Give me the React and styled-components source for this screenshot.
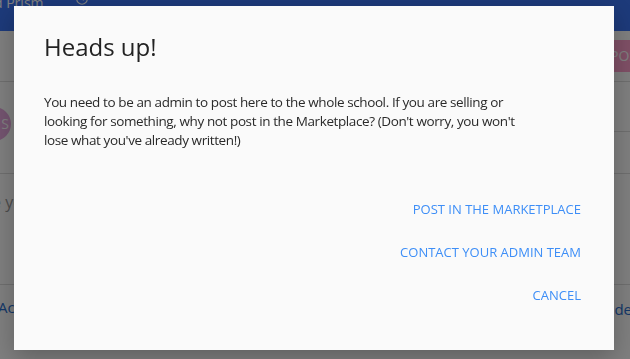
import React from 'react'
import styled, { createGlobalStyle } from 'styled-components'

const GlobalStyle = createGlobalStyle`
  html, body {
    margin: 0;
    padding: 0;
    background: #ffffff;
    font-family: "Open Sans", "Liberation Sans", sans-serif;
    overflow: hidden;
  }
`

const Page = styled.div`
  width: 630px;
  height: 359px;
  display: flex;
  flex-direction: column;
  background: #ffffff;
`

const Header = styled.div`
  height: 31px;
  flex: none;
  background: #3a74f4;
  display: flex;
  align-items: flex-start;
  gap: 31px;
  overflow: hidden;
`

const HeaderTitle = styled.span`
  margin-top: -7px;
  margin-left: -6px;
  color: #ffffff;
  font-size: 14px;
  line-height: 20px;
  white-space: nowrap;
`

const ClockIcon = styled.svg`
  margin-top: -8px;
  width: 14px;
  height: 14px;
  color: #ffffff;
`

const Row = styled.div`
  height: ${p => p.$height}px;
  flex: none;
  border-bottom: 1px solid #dddddd;
  display: flex;
  align-items: ${p => p.$align || 'center'};
  justify-content: ${p => p.$justify || 'space-between'};
  overflow: hidden;
`

const PostButton = styled.div`
  margin-right: -50px;
  width: 70px;
  height: 32px;
  border-radius: 3px;
  background: #ff9fcc;
  color: #ffffff;
  font-size: 14px;
  line-height: 32px;
  padding-left: 10px;
`

const Avatar = styled.div`
  margin-left: -23px;
  margin-top: -8px;
  width: 34px;
  height: 34px;
  border-radius: 50%;
  background: #e8a8e0;
  color: #ffffff;
  font-size: 14px;
  line-height: 34px;
  text-align: right;
  padding-right: 2px;
  box-sizing: border-box;
`

const SideColumn = styled.div`
  align-self: stretch;
  width: 20px;
  display: flex;
  flex-direction: column;
`

const SideCell = styled.div`
  height: ${p => p.$height}px;
  border-bottom: 1px solid #dddddd;
`

const Placeholder = styled.span`
  margin-left: -8px;
  margin-top: 17px;
  color: #999999;
  font-size: 16px;
  white-space: nowrap;
`

const LinkText = styled.span`
  margin-top: ${p => p.$top}px;
  color: #2a6fd0;
  font-size: 15px;
  white-space: nowrap;
`

const Backdrop = styled.div`
  position: fixed;
  inset: 0;
  background: rgba(0, 0, 0, 0.5);
  display: flex;
  align-items: flex-start;
  justify-content: flex-start;
  padding: 6px 0 0 14px;
`

const Dialog = styled.div`
  width: 600px;
  height: 344px;
  box-sizing: border-box;
  background: #fafafa;
  padding: 24px 25px 24px 30px;
  display: flex;
  flex-direction: column;
  box-shadow: 0 8px 24px rgba(0, 0, 0, 0.25);
`

const Title = styled.h2`
  margin: 0 0 30px;
  font-size: 24px;
  font-weight: 400;
  line-height: normal;
  color: #222222;
`

const Message = styled.p`
  margin: 0;
  max-width: 486px;
  font-size: 13.5px;
  letter-spacing: -0.4px;
  line-height: 19px;
  color: #2a2a2a;
`

const Actions = styled.div`
  margin-top: 38px;
  display: flex;
  flex-direction: column;
  align-items: flex-end;
`

const ActionButton = styled.button`
  border: none;
  background: transparent;
  padding: 12px 8px;
  font-family: "Open Sans", "Liberation Sans", sans-serif;
  font-size: 13px;
  line-height: 19px;
  text-transform: uppercase;
  color: #3d8ef7;
  cursor: pointer;
`

export default function App() {
  return (
    <>
      <GlobalStyle />
      <Page>
        <Header>
          <HeaderTitle>d Prism</HeaderTitle>
          <ClockIcon viewBox="0 0 24 24" fill="none" stroke="currentColor" strokeWidth="2">
            <circle cx="12" cy="12" r="9" />
            <path d="M12 7v5l3 2" />
          </ClockIcon>
        </Header>
        <Row $height={50} $justify="flex-end">
          <PostButton>POST</PostButton>
        </Row>
        <Row $height={91}>
          <Avatar>S</Avatar>
          <SideColumn>
            <SideCell $height={49} />
          </SideColumn>
        </Row>
        <Row $height={110} $align="flex-start">
          <Placeholder>e your</Placeholder>
        </Row>
        <Row $height={76} $align="flex-start">
          <LinkText $top={12} style={{ marginLeft: -2 }}>Ac</LinkText>
          <LinkText $top={14} style={{ marginRight: -2 }}>de</LinkText>
        </Row>
      </Page>
      <Backdrop>
        <Dialog role="dialog">
          <Title>Heads up!</Title>
          <Message>
            You need to be an admin to post here to the whole school. If you are selling or
            looking for something, why not post in the Marketplace? (Don't worry, you won't
            lose what you've already written!)
          </Message>
          <Actions>
            <ActionButton>Post in the Marketplace</ActionButton>
            <ActionButton>Contact your admin team</ActionButton>
            <ActionButton>Cancel</ActionButton>
          </Actions>
        </Dialog>
      </Backdrop>
    </>
  )
}
